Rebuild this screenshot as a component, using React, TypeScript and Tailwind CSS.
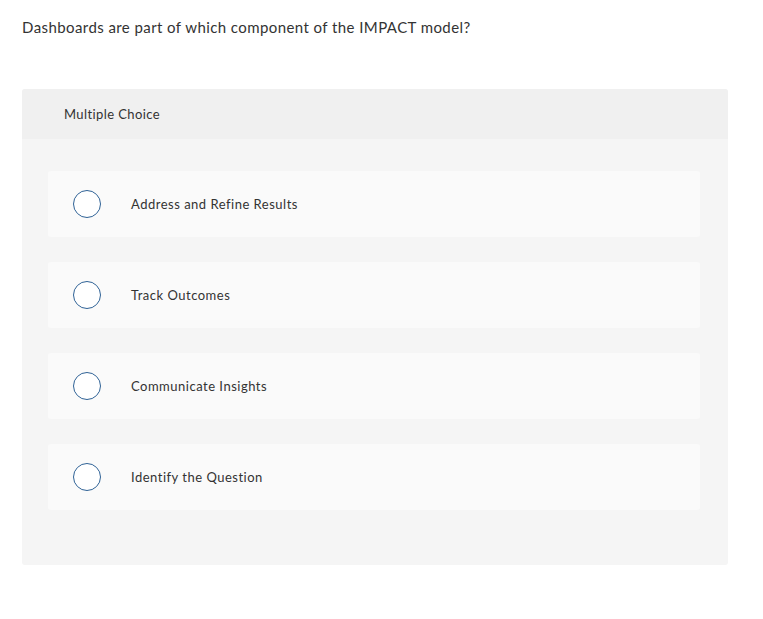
const options = [
  "Address and Refine Results",
  "Track Outcomes",
  "Communicate Insights",
  "Identify the Question",
];

export default function App() {
  return (
    <div className="min-h-screen bg-white font-['Lato',sans-serif] text-[#333]">
      <div className="px-[22px] pt-[17px]">
        <p className="text-[15px] leading-[20px] tracking-[0.42px]">
          Dashboards are part of which component of the IMPACT model?
        </p>

        <div className="mt-[52px] w-[706px] overflow-hidden rounded-[3px] bg-[#f5f5f5]">
          <div className="flex h-[50px] items-center bg-[#f0f0f0] pl-[42px] pt-px text-[13px] tracking-[0.4px]">
            Multiple Choice
          </div>
          <div className="flex flex-col gap-[25px] pb-[55px] pl-[26px] pr-[28px] pt-[32px]">
            {options.map((opt) => (
              <label
                key={opt}
                className="flex h-[66px] cursor-pointer items-center rounded-[3px] bg-[#fafafa] pl-[25px]"
              >
                <span className="h-[28px] w-[28px] shrink-0 rounded-full border-[1.5px] border-[#2f6296] bg-white" />
                <span className="ml-[30px] pt-px text-[13px] tracking-[0.5px]">{opt}</span>
              </label>
            ))}
          </div>
        </div>
      </div>
    </div>
  );
}
